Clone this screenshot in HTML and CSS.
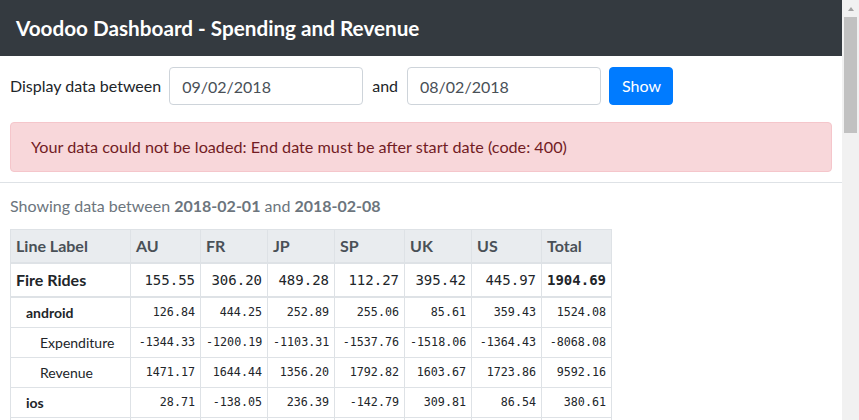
FILE: index.html
```html
<!DOCTYPE html>
<html lang="en">
<head>
<meta charset="utf-8">
<title>Voodoo Dashboard</title>
<link rel="stylesheet" href="styles.css">
</head>
<body>
<div class="page">
  <header class="topbar"><h1 class="brand">Voodoo Dashboard - Spending and Revenue</h1></header>
  <main class="content">
    <form class="range-form">
      <label class="form-label">Display data between</label>
      <input class="date-input" type="text" value="09/02/2018">
      <span class="form-label label-and">and</span>
      <input class="date-input date-end" type="text" value="08/02/2018">
      <button class="btn-show" type="button">Show</button>
    </form>
    <div class="alert">Your data could not be loaded: End date must be after start date (code: 400)</div>
  </main>
  <hr class="divider">
  <section class="content results">
    <p class="summary">Showing data between <strong>2018-02-01</strong> and <strong>2018-02-08</strong></p>
    <table class="data-table">
      <colgroup>
        <col class="c-label"><col class="c-au"><col class="c-fr"><col class="c-jp"><col class="c-sp"><col class="c-uk"><col class="c-us"><col class="c-total">
      </colgroup>
      <thead>
        <tr><th>Line Label</th><th>AU</th><th>FR</th><th>JP</th><th>SP</th><th>UK</th><th>US</th><th>Total</th></tr>
      </thead>
      <tbody>
        <tr class="row-game"><td>Fire Rides</td><td>155.55</td><td>306.20</td><td>489.28</td><td>112.27</td><td>395.42</td><td>445.97</td><td class="tot">1904.69</td></tr>
      </tbody>
      <tbody>
        <tr class="row-os"><td>android</td><td>126.84</td><td>444.25</td><td>252.89</td><td>255.06</td><td>85.61</td><td>359.43</td><td>1524.08</td></tr>
        <tr class="row-line"><td>Expenditure</td><td>-1344.33</td><td>-1200.19</td><td>-1103.31</td><td>-1537.76</td><td>-1518.06</td><td>-1364.43</td><td>-8068.08</td></tr>
        <tr class="row-line"><td>Revenue</td><td>1471.17</td><td>1644.44</td><td>1356.20</td><td>1792.82</td><td>1603.67</td><td>1723.86</td><td>9592.16</td></tr>
        <tr class="row-os"><td>ios</td><td>28.71</td><td>-138.05</td><td>236.39</td><td>-142.79</td><td>309.81</td><td>86.54</td><td>380.61</td></tr>
        <tr class="row-line row-empty"><td></td><td></td><td></td><td></td><td></td><td></td><td></td><td></td></tr>
      </tbody>
    </table>
  </section>
</div>
<div class="scrollbar" aria-hidden="true">
  <span class="scroll-arrow"></span>
  <span class="scroll-thumb"></span>
</div>
</body>
</html>
```

FILE: styles.css
```css
html, body {
  margin: 0;
  padding: 0;
}
body {
  font-family: Lato, "Open Sans", "Noto Sans", sans-serif;
  font-size: 16px;
  line-height: 1.5;
  color: #212529;
  background: #fff;
  display: flex;
  height: 100vh;
  overflow: hidden;
}
.page {
  flex: 1;
  min-width: 0;
  overflow: hidden;
}
.scrollbar {
  flex: none;
  width: 17px;
  background: #f1f1f1;
  display: flex;
  flex-direction: column;
  align-items: center;
}
.scroll-arrow {
  width: 0;
  height: 0;
  margin-top: 7px;
  border-left: 3.5px solid transparent;
  border-right: 3.5px solid transparent;
  border-bottom: 4px solid #a3a3a3;
}
.scroll-thumb {
  margin-top: 6px;
  width: 13px;
  height: 116px;
  background: #c1c1c1;
}
.topbar {
  height: 56px;
  background: #343a40;
  display: flex;
  align-items: center;
  padding: 0 16px;
}
.brand {
  margin: 0;
  font-size: 20.7px;
  font-weight: 700;
  color: #fff;
  line-height: 1.2;
}
.content {
  padding: 11px 10px 0;
}
.range-form {
  display: flex;
  align-items: center;
  margin: 0 0 17px;
}
.form-label {
  margin-right: 8px;
}
.label-and {
  margin-right: 9px;
}
.date-input {
  box-sizing: border-box;
  width: 194px;
  height: 38px;
  border: 1px solid #ced4da;
  border-radius: 4px;
  padding: 6px 12px;
  font: inherit;
  color: #495057;
  margin-right: 9px;
}
.date-end {
  margin-right: 8px;
}
.btn-show {
  box-sizing: border-box;
  height: 38px;
  width: 64px;
  border: 1px solid #007bff;
  background: #007bff;
  color: #fff;
  border-radius: 4px;
  font: inherit;
  padding: 6px 12px;
}
.alert {
  border: 1px solid #f5c6cb;
  background: #f8d7da;
  color: #721c24;
  border-radius: 4px;
  padding: 12px 20px;
  margin-bottom: 10px;
  font-size: 16.2px;
}
.divider {
  margin: 0;
  border: 0;
  border-top: 1px solid #dee2e6;
}
.summary {
  margin: 0 0 11px;
  color: #6c757d;
}
.data-table {
  border-collapse: collapse;
  table-layout: fixed;
  width: 601px;
}
.c-label { width: 120px; }
.c-au { width: 70px; }
.c-fr { width: 67px; }
.c-jp { width: 67px; }
.c-sp { width: 70px; }
.c-uk { width: 67px; }
.c-us { width: 70px; }
.c-total { width: 70px; }
.data-table th,
.data-table td {
  border: 1px solid #dee2e6;
  padding: 4px 5px;
  vertical-align: middle;
}
.data-table th {
  text-align: left;
  background: #e9ecef;
  color: #495057;
  font-weight: 700;
  border-bottom-width: 2px;
}
.data-table tbody + tbody {
  border-top: 2px solid #dee2e6;
}
.data-table td {
  text-align: right;
  font-family: "DejaVu Sans Mono", "Liberation Mono", monospace;
  font-size: 11.7px;
}
.data-table td:first-child {
  text-align: left;
  font-family: Lato, "Open Sans", "Noto Sans", sans-serif;
  font-size: 14px;
}
.row-game td {
  font-size: 14px;
  height: 24px;
}
.row-game td:first-child {
  font-size: 16px;
  font-weight: 700;
}
.row-game td.tot {
  font-weight: 700;
}
.row-os td,
.row-line td {
  height: 21px;
}
.row-os td:first-child {
  font-weight: 700;
  padding-left: 15px;
}
.row-line td:first-child {
  padding-left: 29px;
}
```
